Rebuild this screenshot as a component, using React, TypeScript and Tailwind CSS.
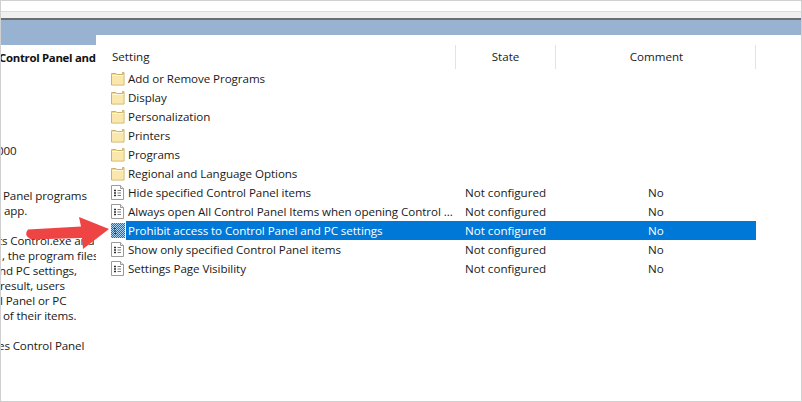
const font = { fontFamily: '"Open Sans", "Noto Sans", sans-serif' };

function Folder() {
  return (
    <svg width="15" height="14" viewBox="0 0 15 14" className="shrink-0">
      <path d="M1.5 2.5 V1.5 H6 L7 2.5 H12.5 V.5 H14 V13 H1.5 Z" fill="#f3d88a" stroke="#cdb06a" strokeWidth="1" />
      <rect x="2" y="4" width="11.5" height="8.5" fill="#fae7ac" />
      <path d="M2 3.5 H13.5" stroke="#fff6d6" />
    </svg>
  );
}

function Policy({ selected }: { selected?: boolean }) {
  if (selected) {
    return (
      <svg width="15" height="15" viewBox="0 0 15 15" className="shrink-0">
        <defs>
          <pattern id="dither" width="2" height="2" patternUnits="userSpaceOnUse">
            <rect width="2" height="2" fill="#a9d3f3" />
            <rect width="1" height="1" fill="#0078d7" />
            <rect x="1" y="1" width="1" height="1" fill="#0078d7" />
          </pattern>
        </defs>
        <rect x="1" y="0" width="14" height="15" fill="url(#dither)" />
        <path d="M4 5.5h2M4 8h2M4 10.5h2" stroke="#0b3f70" strokeWidth="1.2" />
      </svg>
    );
  }
  return (
    <svg width="15" height="15" viewBox="0 0 15 15" className="shrink-0">
      <path d="M1.5 .5 H10.5 L13.5 3.5 V14.5 H1.5 Z" fill="#ffffff" stroke="#9a9a9a" />
      <path d="M10.5 .5 V3.5 H13.5" fill="#eeeeee" stroke="#9a9a9a" />
      <path d="M4 5.5h2M4 8h2M4 10.5h2" stroke="#2c2c2c" strokeWidth="1.3" />
      <path d="M7.5 5.5h3.5M7.5 8h3.5M7.5 10.5h3.5" stroke="#7a7a7a" />
    </svg>
  );
}

const folders = [
  "Add or Remove Programs",
  "Display",
  "Personalization",
  "Printers",
  "Programs",
  "Regional and Language Options",
];

const policies = [
  { name: "Hide specified Control Panel items" },
  { name: "Always open All Control Panel Items when opening Control ..." },
  { name: "Prohibit access to Control Panel and PC settings", selected: true },
  { name: "Show only specified Control Panel items" },
  { name: "Settings Page Visibility" },
];

const leftLines = [
  { t: "000", c: "-ml-[4px]" },
  { t: "" },
  { t: "" },
  { t: "Panel programs", c: "ml-[2px]" },
  { t: "app.", c: "ml-[3px]" },
  { t: "" },
  { t: "ts Control.exe and", c: "-ml-[3px]" },
  { t: ", the program files", c: "ml-[1px]" },
  { t: "nd PC settings,", c: "-ml-[2px]" },
  { t: "result, users", c: "-ml-[1px]" },
  { t: "l Panel or PC", c: "-ml-[1px]" },
  { t: "of their items.", c: "ml-[2px]" },
  { t: "" },
  { t: "es Control Panel", c: "-ml-[3px]" },
];

export default function App() {
  return (
    <div
      className="relative flex h-[402px] w-[802px] flex-col overflow-hidden border border-[#d0d0d0] bg-white text-[11.6px] leading-[15px] text-[#1a1a1a]"
      style={font}
    >
      <div className="h-[10px] shrink-0 bg-white" />
      <div className="h-[7px] shrink-0 border-t border-[#dcdcdc] bg-[#f0f0f0]" />
      <div className="h-[2px] shrink-0 bg-[#6d6d6d]" />
      <div className="h-[15px] shrink-0 bg-[#98b2d1]" />
      <div className="flex min-h-0 flex-1">
        <div className="w-[95px] shrink-0 overflow-hidden">
          <div className="flex h-[10px] bg-[#98b2d1]" />
          <div className="-ml-[2px] mt-[5px] whitespace-nowrap text-[11.4px] font-bold tracking-[-0.3px] text-[#111111]">
            Control Panel and
          </div>
          <div className="mt-[78px] flex flex-col tracking-[-0.12px]">
            {leftLines.map((l, i) => (
              <div key={i} className={`h-[15px] whitespace-nowrap ${l.c ?? ""}`}>
                {l.t}
              </div>
            ))}
          </div>
        </div>
        <div className="flex-1 rounded-tl-[8px] bg-white">
          <div className="mt-[10px] flex h-[24px] items-center text-center">
            <div className="h-full w-[359px] pl-[16px] text-left leading-[24px]">Setting</div>
            <div className="h-full w-[100px] border-l border-[#e3e3e3] leading-[24px]">State</div>
            <div className="h-full w-[201px] border-x border-[#e3e3e3] pl-[2px] leading-[24px]">Comment</div>
          </div>
          <div className="flex w-[660px] flex-col">
            {folders.map((f) => (
              <div key={f} className="flex h-[19px] items-center gap-[3px] pl-[14px] whitespace-nowrap tracking-[-0.06px]">
                <Folder />
                <span>{f}</span>
              </div>
            ))}
            {policies.map((p) => (
              <div key={p.name} className="flex h-[19px] items-center whitespace-nowrap">
                <div className="flex w-[30px] shrink-0 justify-start pl-[14px]">
                  <Policy selected={p.selected} />
                </div>
                <div
                  className={`flex h-full flex-1 items-center ${p.selected ? "bg-[#0078d7] text-white" : ""}`}
                >
                  <span className="w-[339px] shrink-0 overflow-hidden pl-[2px] tracking-[-0.06px]">{p.name}</span>
                  <span className="w-[183px] shrink-0">Not configured</span>
                  <span>No</span>
                </div>
              </div>
            ))}
          </div>
        </div>
      </div>
      <svg width="120" height="60" viewBox="1 201 120 60" className="absolute left-0 top-[200px]">
        <path d="M28 229.5 L81 226.5 L79 217 L109 229 L83 249 L82 238 L31 239.5 Q23 235 28 229.5 Z" fill="#ee4444" />
      </svg>
    </div>
  );
}
